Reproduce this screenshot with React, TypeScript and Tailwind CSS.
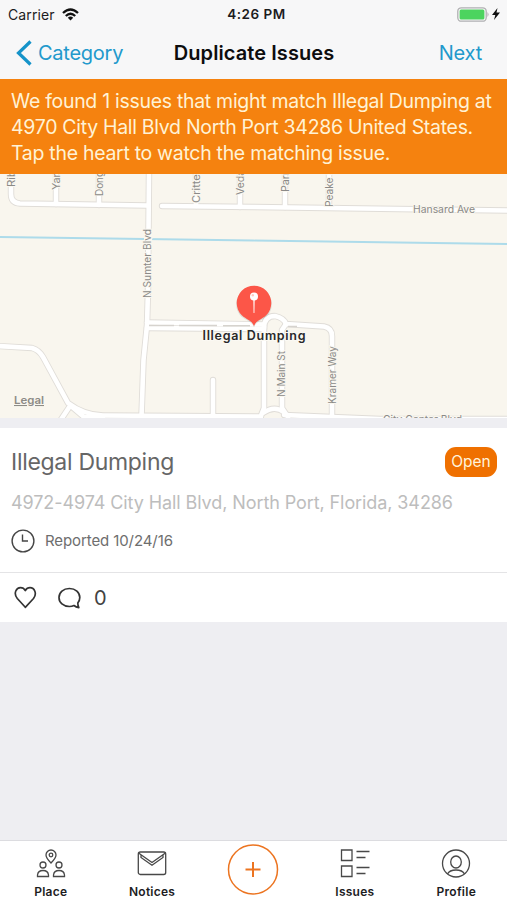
import React from "react";

const roads = [
  "M11 172V194Q11 203 20 203.5L147 205.5",
  "M56 172V204",
  "M99 172V205",
  "M149 172L148 290L147 325L143.500 360L141.500 416",
  "M162 206L253 207L510 210.500",
  "M196 172V206",
  "M240 172V207",
  "M285 172V207",
  "M329 172V207",
  "M-2 346L32 348Q39 350 43 357L68 403Q84 415 103 415.500L261 416.500",
  "M70 406L60 421",
  "M71 406L84 417H103",
  "M213 380V415",
  "M147 322.500L264 324.500",
  "M147 328L264 329",
  "M264 328Q264 316 275 316Q284 318 286 324L324 326.500Q332 328 332 336V420",
  "M264 326V408L260 418",
  "M286 324L282 330V408L288 417",
  "M263 413Q274 405 284 412",
  "M284 415L380 419H510",
];

type LabelProps = { x: number; y: number; w: number; text: string; vertical?: boolean };

function MapLabel({ x, y, w, text, vertical }: LabelProps) {
  return (
    <text
      x={x}
      y={y}
      textLength={w}
      lengthAdjust="spacingAndGlyphs"
      transform={vertical ? `rotate(-90 ${x} ${y})` : undefined}
      className="fill-[#8b8a88] stroke-[#faf7ef] stroke-[2px] text-[10.5px] [paint-order:stroke]"
    >
      {text}
    </text>
  );
}

function MapView() {
  return (
    <svg viewBox="0 174 507 244" className="block h-[244px] w-full shrink-0 bg-[#f9f6ee]">
      <g fill="none" stroke="#e0ddd8" strokeWidth="6.400" strokeLinecap="round" strokeLinejoin="round">
        {roads.map((d) => <path key={d} d={d} />)}
      </g>
      <g fill="none" stroke="#fff" strokeWidth="4.600" strokeLinecap="round" strokeLinejoin="round">
        {roads.map((d) => <path key={d} d={d} />)}
      </g>
      <path d="M149 325.500H174M179 325.500H217M223 325.800H250M288 326.500H297" stroke="#d6d3ce" strokeWidth="1.500" />
      <path d="M0 237L253 240.500L507 244" stroke="#addbea" strokeWidth="1.800" fill="none" />
      <path d="M148 234V245" stroke="#faf7ef" strokeWidth="8" />
      <MapLabel x={14.5} y={187} w={17} text="Rib" vertical />
      <MapLabel x={59.5} y={190} w={19} text="Yan" vertical />
      <MapLabel x={102.5} y={196} w={25} text="Dong" vertical />
      <MapLabel x={200} y={203} w={33} text="Critter" vertical />
      <MapLabel x={243.5} y={195} w={25} text="Veda" vertical />
      <MapLabel x={288.5} y={192} w={21} text="Parr" vertical />
      <MapLabel x={332.5} y={207} w={39} text="Peake S" vertical />
      <MapLabel x={150.5} y={298} w={69} text="N Sumter Blvd" vertical />
      <MapLabel x={285} y={397} w={46} text="N Main St" vertical />
      <MapLabel x={335.5} y={404} w={58} text="Kramer Way" vertical />
      <MapLabel x={413} y={212.5} w={62} text="Hansard Ave" />
      <MapLabel x={383} y={422.5} w={79} text="City Center Blvd" />
      <text x="14" y="404" textLength="30" lengthAdjust="spacingAndGlyphs" className="fill-[#8d8b86] stroke-[#faf7ef] stroke-[1px] text-[10.5px] font-semibold underline [paint-order:stroke]">Legal</text>
      <path d="M254 327.500C251.500 321 246 320.500 241.200 316.500A17.800 17.800 0 1 1 266.800 316.500C262 320.500 256.500 321 254 327.500Z" fill="#000" opacity=".1" />
      <path d="M254 326C251.500 320 246 319.500 241.800 315.300A17.300 17.300 0 1 1 266.200 315.300C262 319.500 256.500 320 254 326Z" fill="#fc5648" />
      <path d="M253 299H255L254.600 313H253.400Z" fill="#ffc9c2" />
      <circle cx="254" cy="296.500" r="4" fill="#fff" />
      <circle cx="252.800" cy="295.300" r="1.200" fill="#ffc9c2" />
      <text x="202.500" y="340" textLength="103" className="fill-[#29292b] stroke-[#fbf9f3] stroke-[2px] text-[12.5px] font-semibold [paint-order:stroke]">Illegal Dumping</text>
    </svg>
  );
}

function StatusBar() {
  return (
    <div className="grid h-7 grid-cols-3 items-center pl-2 pr-[7px] text-[14px] text-[#1c1c1e]">
      <div className="flex items-center gap-[7px]">
        <span className="tracking-[0.1px]">Carrier</span>
        <svg width="17" height="13" viewBox="0 0 17 13" fill="none" stroke="#111" strokeWidth="2.300">
          <path d="M1 5Q8.500-2 16 5M3.800 8Q8.500 3.600 13.200 8" />
          <path d="M5.800 9.700Q8.500 7.400 11.200 9.700L8.500 12.400Z" fill="#111" stroke="none" />
        </svg>
      </div>
      <span className="pl-[5px] text-center text-[13.5px] font-semibold tracking-[0.5px]">4:26 PM</span>
      <div className="flex items-center justify-end gap-[3px]">
        <svg width="32" height="15" viewBox="0 0 32 15">
          <rect x=".8" y=".8" width="28.400" height="13.400" rx="3.500" fill="#f7f7f8" stroke="#b0b0b2" strokeWidth="1.300" />
          <rect x="2.600" y="2.600" width="24.800" height="9.800" rx="1.500" fill="#4cd45f" />
          <path d="M30.500 5Q32.500 7.500 30.500 10Z" fill="#aaa" />
        </svg>
        <svg width="8" height="12" viewBox="0 0 8 12"><path d="M5.500 0L0 7H3.300L2 12L8 4.600H4.500Z" fill="#111" /></svg>
      </div>
    </div>
  );
}

function NavBar() {
  return (
    <div className="flex h-[51px] items-center justify-between pb-[1px] pl-4 pr-[25px] text-xl text-[#2299cc]">
      <div className="flex w-[130px] items-center gap-[5px]">
        <svg width="17" height="26" viewBox="0 0 17 26" fill="none" stroke="#1593c9" strokeWidth="3.200"><path d="M14.500 1.500L2.500 13L14.500 24.500" /></svg>
        <span className="tracking-[-0.25px]">Category</span>
      </div>
      <h1 className="whitespace-nowrap font-semibold tracking-[0.08px] text-[#0d0d0e]">Duplicate Issues</h1>
      <span className="w-[120px] text-right tracking-[-0.2px]">Next</span>
    </div>
  );
}

function IssueCard() {
  return (
    <section className="mt-2.5 h-[194px] shrink-0 bg-white">
      <div className="h-36 pl-[11px] pr-2.5 pt-[18px]">
        <div className="flex h-8 items-center justify-between">
          <h2 className="text-[23px] tracking-[-0.3px] text-[#666]">Illegal Dumping</h2>
          <span className="flex h-[30px] w-[52px] items-center justify-center rounded-[11px] bg-[#ef7000] text-[15.5px] text-[#fff3dc]">Open</span>
        </div>
        <p className="mt-[11px] whitespace-nowrap text-lg leading-7 tracking-[-0.09px] text-[#bdbdbd]">4972-4974 City Hall Blvd, North Port, Florida, 34286</p>
        <div className="mt-3 flex items-center gap-2.5">
          <svg width="24" height="24" viewBox="0 0 24 24" fill="none" stroke="#454545" strokeWidth="1.400"><circle cx="12" cy="12" r="10.900" /><path d="M11.500 5.500V12H17" /></svg>
          <span className="text-[15px] tracking-[-0.1px] text-[#6e6e6e]">Reported 10/24/16</span>
        </div>
      </div>
      <div className="flex h-[50px] items-center border-t border-[#e4e4e6] pl-3.5">
        <svg width="24" height="24" viewBox="0 0 24 24" fill="none" stroke="#333" strokeWidth="1.700" strokeLinejoin="round">
          <path d="M11.300 21.300L3.300 12.500C-1 7 2.500 1.600 6.500 1.600Q9.700 1.600 11.300 4.500Q13 1.600 16 1.600C20.500 1.600 23.300 7.500 19.500 12.500Z" />
        </svg>
        <svg className="ml-5" width="24" height="24" viewBox="0 0 24 24" fill="none" stroke="#333" strokeWidth="1.700" strokeLinejoin="round">
          <path d="M19.800 17Q21.800 14.500 21.800 11.500C21.800 6.300 17.500 2.500 11.400 2.500S1 6.300 1 11.500S5.300 20.500 11.400 20.500Q14 20.500 16 19.500Q18 21.300 20.800 21.700Q19.800 19.500 19.800 17Z" />
        </svg>
        <span className="ml-3 text-xl text-[#424242]">0</span>
      </div>
    </section>
  );
}

function Tab({ label, children }: { label: string; children: React.ReactNode }) {
  return (
    <div className="flex flex-col items-center pt-[7px] text-xs font-semibold tracking-[0.25px] text-[#1d1d1f]">
      <svg width="32" height="32" viewBox="0 0 32 32" fill="none" stroke="#484848" strokeWidth="1.300">{children}</svg>
      <span className="mt-1 leading-4">{label}</span>
    </div>
  );
}

function TabBar() {
  return (
    <nav className="grid h-[60px] shrink-0 grid-cols-5 border-t border-[#dcdce0] bg-white">
      <Tab label="Place">
        <path d="M16 15Q11 10 11 7A5 5 0 0 1 21 7Q21 10 16 15Z" />
        <circle cx="16" cy="7" r="1.800" />
        <circle cx="8" cy="17" r="3" /><circle cx="24" cy="17" r="3" />
        <path d="M2.500 28.500V27Q3 22.500 8 22.500T13.500 27V28.500ZM18.500 28.500V27Q19 22.500 24 22.500T29.500 27V28.500Z" />
      </Tab>
      <Tab label="Notices">
        <rect x="2.300" y="4" width="27.400" height="22.500" rx="2" />
        <path d="M5 6.700L16 14.500L27 6.700V9.500L16 17.300L5 9.500ZM2.500 5L5 6.700M29.500 5L27 6.700" />
      </Tab>
      <div className="flex justify-center pt-[3px]">
        <svg width="52" height="52" viewBox="0 0 52 52" fill="none" stroke="#ec7420"><circle cx="26" cy="25.500" r="24.500" strokeWidth="1.500" /><path d="M26 18V33M18.500 25.500H33.500" strokeWidth="2" /></svg>
      </div>
      <Tab label="Issues">
        <path d="M2.500 2H13V12.500H2.500ZM2.500 18H13V28.500H2.500ZM17.500 3.500H30.500M17.500 9.500H26.500M17.500 19.500H30.500M17.500 25.500H26.500" />
      </Tab>
      <Tab label="Profile">
        <circle cx="16" cy="15.500" r="13.500" /><ellipse cx="16" cy="14" rx="5.300" ry="6" />
        <path d="M7.500 26Q9.500 22 16 22T24.500 26" />
      </Tab>
    </nav>
  );
}

export default function App() {
  return (
    <div className="flex h-[900px] w-full flex-col overflow-hidden bg-[#eeeef2] font-['Inter','Liberation_Sans',sans-serif]">
      <header className="h-[79px] shrink-0 bg-[#f7f7f8]">
        <StatusBar />
        <NavBar />
      </header>
      <div className="h-[95px] shrink-0 whitespace-nowrap bg-[#f5820f] px-[11px] pt-[9px] text-[19.5px] leading-[26px] tracking-[-0.3px] text-[#fff2d5]">
        <p>We found 1 issues that might match Illegal Dumping at</p>
        <p>4970 City Hall Blvd North Port 34286 United States.</p>
        <p>Tap the heart to watch the matching issue.</p>
      </div>
      <MapView />
      <IssueCard />
      <div className="flex-1" />
      <TabBar />
    </div>
  );
}
